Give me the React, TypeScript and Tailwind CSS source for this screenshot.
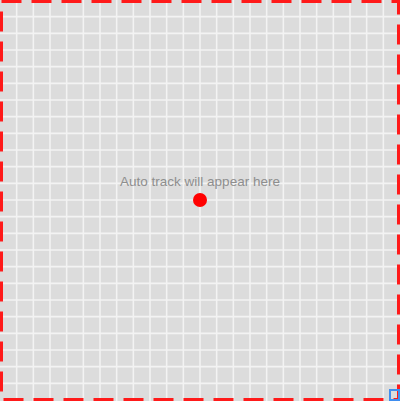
import React from "react";

const CELL = 400 / 24;

function GridLines() {
  const lines = [];
  for (let i = 1; i < 24; i++) {
    const p = i * CELL;
    lines.push(<line key={`v${i}`} x1={p} y1={0} x2={p} y2={401} />);
    lines.push(<line key={`h${i}`} x1={0} y1={p} x2={400} y2={p} />);
  }
  return (
    <svg className="absolute inset-0" width={400} height={401} viewBox="0 0 400 401">
      <g stroke="#f3f3f3" strokeWidth={1.6}>{lines}</g>
      <rect
        x={1.5}
        y={1.5}
        width={397}
        height={398}
        fill="none"
        stroke="#ff1a1a"
        strokeWidth={3}
        strokeDasharray="20 10"
      />
      <rect x={390} y={390} width={9} height={10} fill="none" stroke="#3f8ef0" strokeWidth={2} />
    </svg>
  );
}

export default function App() {
  return (
    <div className="relative w-[400px] h-[401px] bg-[#dcdcdc] overflow-hidden">
      <GridLines />
      <div className="absolute inset-x-0 top-[174px] flex justify-center">
        <p className="text-[13.5px] leading-4 text-[#8e8e8e] font-['Liberation_Sans',Arial,sans-serif]">
          Auto track will appear here
        </p>
      </div>
      <div className="absolute left-[193px] top-[193px] w-[14px] h-[14px] rounded-full bg-[#ff0000]" />
    </div>
  );
}
